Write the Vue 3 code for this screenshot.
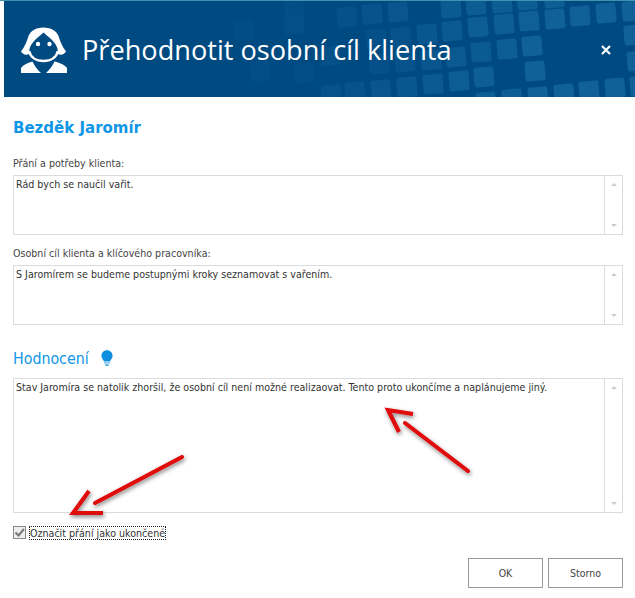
<script setup>
import { ref } from 'vue';

const finished = ref(true);

// tiles of the header background, in header pixels: x, y, opacity
const tiles = [
  [437, -3, .75], [462, -6, .8], [488, -8, .85], [513, -11, .9], [540, -13, .9],
  [333, 6, .35], [358, 3, .45], [384, 1, .5],
  [438, 20, .7], [464, 16, .8], [490, 13, .9], [515, 10, .95], [541, 8, 1], [566, 5, 1], [592, 2, 1], [618, 0, 1],
  [362, 28, .3], [387, 26, .4], [413, 23, .6],
  [467, 41, .75], [493, 38, .85], [518, 35, 1], [620, 24, 1],
  [365, 53, .3], [391, 51, .4], [417, 49, .55], [442, 46, .65], [623, 50, 1],
  [521, 60, 1],
  [393, 76, .6], [419, 73, .7], [445, 70, .8], [470, 66, .85],
  [341, 81, .4], [367, 79, .5], [317, 84, .4],
  [472, 91, .85], [498, 88, .9], [524, 86, 1], [550, 83, 1], [575, 80, 1], [601, 77, 1], [626, 75, 1],
  [230, 20, .18], [280, 13, .25], [280, -6, .2], [246, 60, .2], [290, 62, .22], [316, 45, .28],
];
</script>

<template>
  <div class="dialog">
    <header class="header">
      <svg class="pattern" width="631" height="96" viewBox="0 0 631 96">
        <rect
          v-for="(t, i) in tiles"
          :key="i"
          :x="t[0]"
          :y="t[1]"
          :opacity="t[2]"
          width="20"
          height="20"
          rx="2.5"
          fill="#0f6198"
          :transform="`rotate(-5 ${t[0] + 10} ${t[1] + 10})`"
        />
      </svg>
      <svg class="avatar" width="47" height="47" viewBox="0 0 47 47">
        <path fill="#fff" d="M22.500 .5C15 .5 9.500 4 7.500 9 6 14 3.500 20 0 24.500 1.500 27.500 5 28.500 8 27 7.500 17 15 12 22.500 5.500 30 12 37.500 17 37 27 40 28.500 43.500 27.500 45 24.500 41.500 20 39 14 37.500 9 35.500 4 30 .5 22.500 .5Z" />
        <path fill="none" stroke="#fff" stroke-width="2.600" d="M8 24C9.500 30 15 34 22.500 34S35.500 30 37 24" />
        <circle cx="17" cy="17" r="2.200" fill="#fff" />
        <circle cx="28.500" cy="17" r="2.200" fill="#fff" />
        <path fill="#fff" d="M0 46V41C2 38 6 36 11.500 34.500 13.500 39 16.500 43 20 46Z" />
        <path fill="#fff" d="M46 46V41C44 38 39.500 36 33.500 34.500 31.500 39 28.500 43 25 46Z" />
      </svg>
      <h1 class="title">Přehodnotit osobní cíl klienta</h1>
      <svg class="close" width="10" height="10" viewBox="0 0 10 10">
        <path d="M1 1L9 9M9 1L1 9" stroke="#fff" stroke-width="2.200" />
      </svg>
    </header>

    <main class="content">
      <h2 class="name">Bezděk Jaromír</h2>

      <label class="field-label">Přání a potřeby klienta:</label>
      <div class="memo small">
        <div class="memo-text">Rád bych se naučil vařit.</div>
        <div class="scroll"><span class="up"></span><span class="down"></span></div>
      </div>

      <label class="field-label second">Osobní cíl klienta a klíčového pracovníka:</label>
      <div class="memo small">
        <div class="memo-text">S Jaromírem se budeme postupnými kroky seznamovat s vařením.</div>
        <div class="scroll"><span class="up"></span><span class="down"></span></div>
      </div>

      <div class="rating">
        <h3>Hodnocení</h3>
        <svg width="12" height="16" viewBox="0 0 14 18">
          <path fill="#0f8fe0" d="M7 0C3 0 .5 3 .5 6.500.5 9.500 2.500 11 3.500 13H10.500C11.500 11 13.500 9.500 13.500 6.500 13.500 3 11 0 7 0Z" />
          <rect x="3.500" y="14" width="7" height="1.500" fill="#6fbdec" />
          <rect x="5" y="16.500" width="4" height="1.500" fill="#0f8fe0" />
        </svg>
      </div>
      <div class="memo big">
        <div class="memo-text">Stav Jaromíra se natolik zhoršil, že osobní cíl není možné realizaovat. Tento proto ukončíme a naplánujeme jiný.</div>
        <div class="scroll"><span class="up"></span><span class="down"></span></div>
      </div>

      <div class="check-row" @click="finished = !finished">
        <span class="check">
          <svg v-if="finished" width="11" height="11" viewBox="0 0 11 11">
            <path d="M1.500 5.500L4.500 8.500L10 2" fill="none" stroke="#777" stroke-width="2" />
          </svg>
        </span>
        <span class="check-label">Označit přání jako ukončené</span>
      </div>

      <div class="buttons">
        <button class="btn">OK</button>
        <button class="btn">Storno</button>
      </div>
    </main>

    <svg class="arrows" width="635" height="598" viewBox="0 0 635 598">
      <defs>
        <filter id="arrow-shadow" x="-20%" y="-20%" width="140%" height="140%">
          <feDropShadow dx="1" dy="2" stdDeviation="2" flood-color="#000" flood-opacity=".5" />
        </filter>
      </defs>
      <g filter="url(#arrow-shadow)" fill="none" stroke="#e00707" stroke-width="4" stroke-linecap="round">
        <path d="M405 423L468 471" />
        <path d="M413 414L388 410L399 432" stroke-linejoin="miter" stroke-linecap="butt" />
        <path d="M95 503L182 457" />
        <path d="M89 491L73 513L103 513" stroke-linejoin="miter" stroke-linecap="butt" />
      </g>
    </svg>
  </div>
</template>

<style scoped>
.dialog {
  position: relative;
  width: 635px;
  height: 598px;
  overflow: hidden;
  background: #fff;
  border-top: 1px solid #3f93ab;
  box-sizing: border-box;
  font-family: "DejaVu Sans Condensed", "DejaVu Sans", sans-serif;
  font-stretch: condensed;
  font-size: 10.6px;
  color: #444;
}

.header {
  position: relative;
  display: flex;
  align-items: center;
  height: 96px;
  margin-left: 4px;
  padding: 0 24px 0 17px;
  background: #004a82;
  overflow: hidden;
}

.pattern {
  position: absolute;
  left: 0;
  top: 0;
}

.avatar {
  position: relative;
  flex: none;
  margin-top: 2px;
}

.title {
  position: relative;
  flex: 1;
  margin: 0 0 0 14px;
  font-family: "Open Sans", sans-serif;
  font-stretch: normal;
  font-size: 27.15px;
  font-weight: 400;
  color: #fff;
}

.close {
  position: relative;
  flex: none;
  margin-top: 1px;
}

.content {
  display: flex;
  flex-direction: column;
  padding: 0 12px 0 13px;
}

.name {
  margin: 21px 0 0;
  font-family: "DejaVu Sans", sans-serif;
  font-stretch: normal;
  font-size: 15px;
  line-height: 20px;
  font-weight: 700;
  color: #0f96e6;
}

.field-label {
  margin-top: 18px;
  line-height: 14px;
}

.field-label.second {
  margin-top: 11px;
}

.memo {
  display: flex;
  margin-top: 5px;
  border: 1px solid #dcdcdc;
  box-sizing: border-box;
}

.memo.small {
  height: 60px;
}

.memo.big {
  height: 135px;
  margin-top: 9px;
}

.memo-text {
  flex: 1;
  padding: 1px 2px;
  line-height: 14px;
  color: #333;
}

.scroll {
  position: relative;
  flex: none;
  width: 17px;
  border-left: 1px solid #dcdcdc;
}

.up,
.down {
  position: absolute;
  left: 6px;
  width: 0;
  height: 0;
  border-left: 3px solid transparent;
  border-right: 3px solid transparent;
}

.up {
  top: 7px;
  border-bottom: 3px solid #ccc;
}

.down {
  bottom: 7px;
  border-top: 3px solid #ccc;
}

.rating {
  display: flex;
  align-items: center;
  gap: 12px;
  margin-top: 22px;
  height: 22px;
}

.rating h3 {
  margin: 0;
  font-size: 15.8px;
  font-weight: 400;
  color: #0f96e6;
}

.check-row {
  display: flex;
  align-items: center;
  gap: 3px;
  margin-top: 11px;
  height: 17px;
}

.check {
  display: flex;
  align-items: center;
  justify-content: center;
  width: 11px;
  height: 11px;
  border: 1px solid #8a8a8a;
  background: #eee;
}

.check-label {
  padding: 1px;
  outline: 1px dotted #222;
  outline-offset: -1px;
  color: #333;
}

.buttons {
  display: flex;
  justify-content: flex-end;
  gap: 5px;
  margin-top: 17px;
}

.btn {
  width: 75px;
  height: 30px;
  padding: 0;
  border: 1px solid #999;
  background: #fff;
  font-family: inherit;
  font-stretch: inherit;
  font-size: 10.5px;
  color: #444;
}

.arrows {
  position: absolute;
  left: 0;
  top: -1px;
  pointer-events: none;
}
</style>
